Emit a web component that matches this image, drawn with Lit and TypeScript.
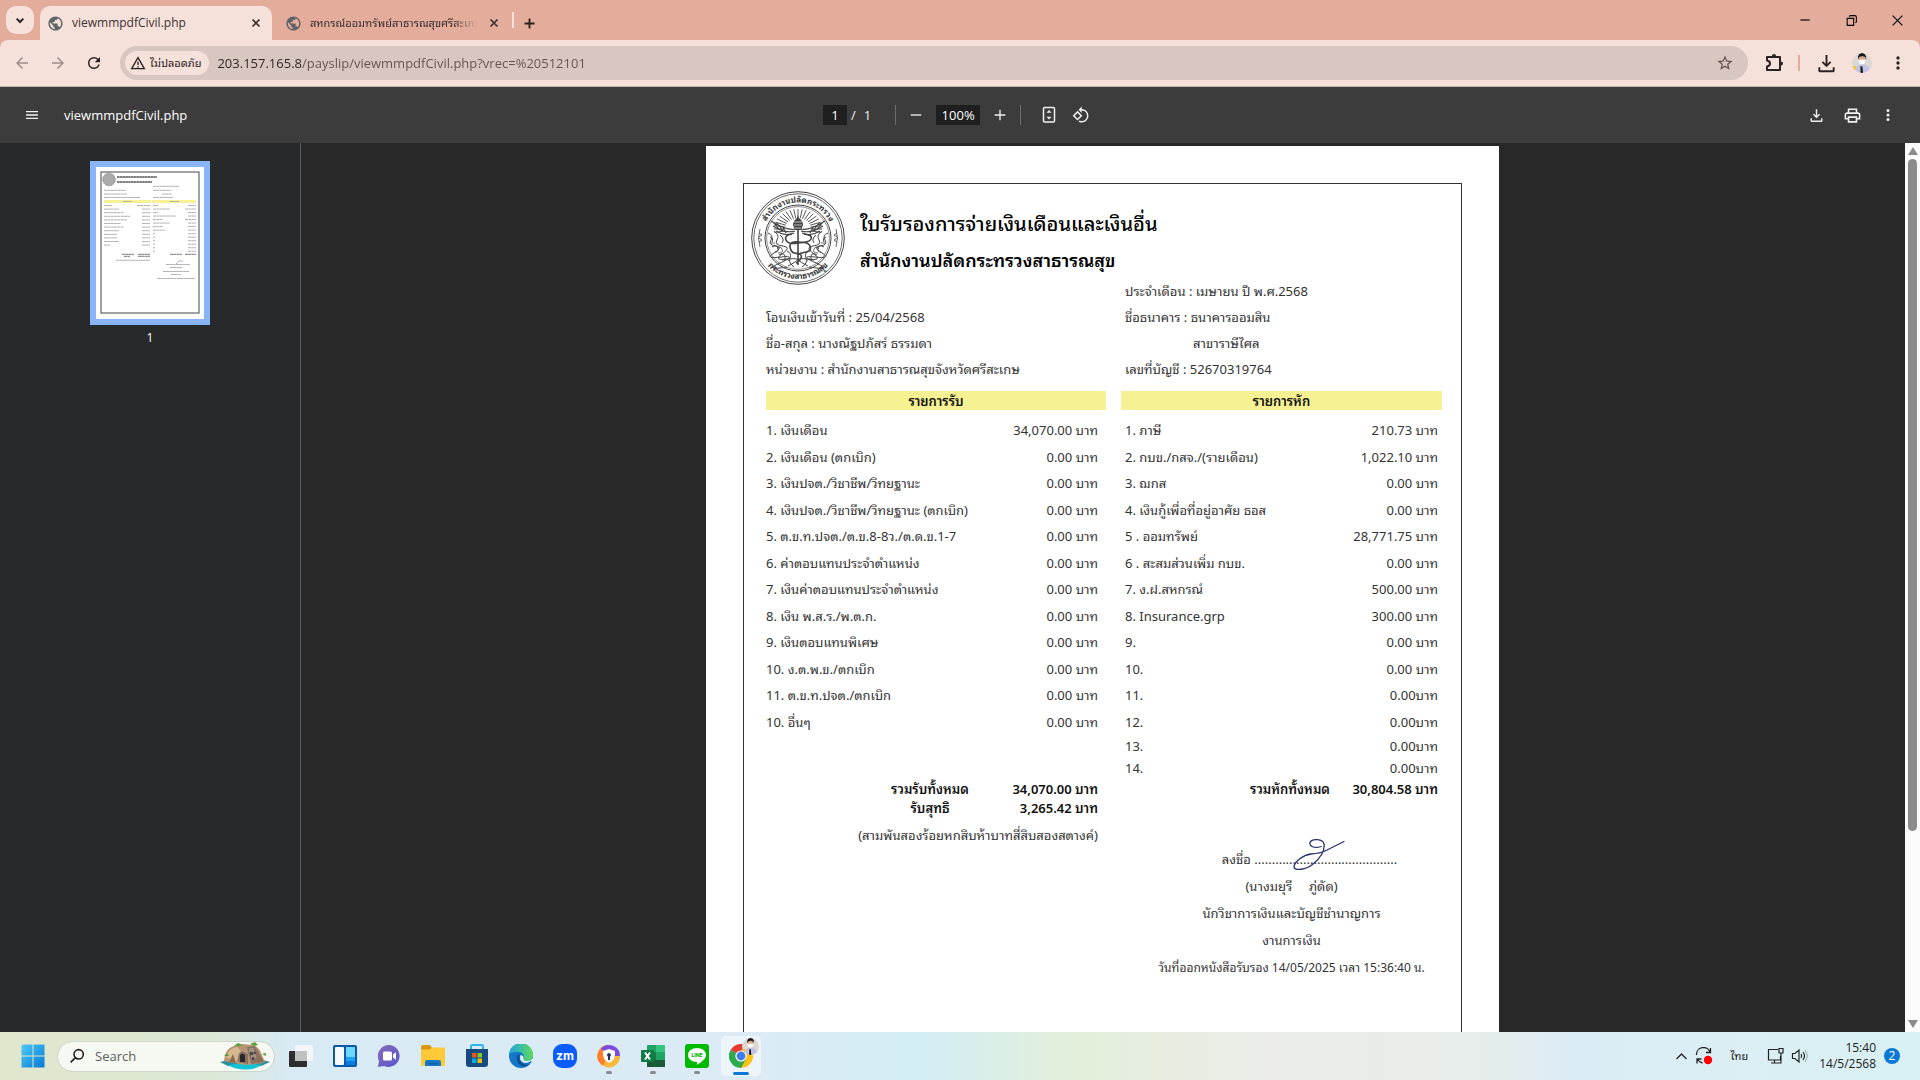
import { LitElement, html, svg, css, nothing } from "lit";
import { customElement } from "lit/decorators.js";

const THAI = css`"Noto Sans", "Noto Sans Thai Looped", "Loma", "Noto Sans Thai", "Liberation Sans", sans-serif`;

const icon = (path: string, size = 20) => svg`<svg viewBox="0 0 24 24" width=${size} height=${size} aria-hidden="true"><path fill="currentColor" d=${path}/></svg>`;
const line = (path: string, size = 20, w = 2) => svg`<svg viewBox="0 0 24 24" width=${size} height=${size} aria-hidden="true"><path fill="none" stroke="currentColor" stroke-width=${w} d=${path}/></svg>`;

const P = {
  globe: "M12 2C6.48 2 2 6.48 2 12s4.48 10 10 10 10-4.48 10-10S17.52 2 12 2zm-1 17.93c-3.95-.49-7-3.85-7-7.93 0-.62.08-1.21.21-1.79L9 15v1c0 1.1.9 2 2 2v1.93zm6.9-2.54c-.26-.81-1-1.39-1.9-1.39h-1v-3c0-.55-.45-1-1-1H8v-2h2c.55 0 1-.45 1-1V7h2c1.1 0 2-.9 2-2v-.41c2.93 1.19 5 4.06 5 7.41 0 2.08-.8 3.97-2.1 5.39z",
  back: "M20 11H7.83l5.59-5.59L12 4l-8 8 8 8 1.41-1.41L7.83 13H20v-2z",
  forward: "M4 11h12.17l-5.59-5.59L12 4l8 8-8 8-1.41-1.41L16.17 13H4v-2z",
  reload: "M17.65 6.35A7.96 7.96 0 0 0 12 4a8 8 0 1 0 7.73 10h-2.08A6 6 0 1 1 12 6c1.66 0 3.14.69 4.22 1.78L13 11h7V4z",
  star: "M22 9.24l-7.19-.62L12 2 9.19 8.63 2 9.24l5.46 4.73L5.82 21 12 17.27 18.18 21l-1.63-7.03L22 9.24zM12 15.4l-3.76 2.27 1-4.28-3.32-2.88 4.38-.38L12 6.1l1.71 4.04 4.38.38-3.32 2.88 1 4.28L12 15.4z",
  download: "M12 16l-5-5 1.4-1.45 2.6 2.6V3h2v9.15l2.6-2.6L17 11zM5 21q-1.5 0-1.5-1.5V16h2v3h13v-3h2v3.5q0 1.500-1.500 1.500z",
  dots: "M12 8a2 2 0 1 0 0-4 2 2 0 0 0 0 4zm0 6a2 2 0 1 0 0-4 2 2 0 0 0 0 4zm0 6a2 2 0 1 0 0-4 2 2 0 0 0 0 4z",
  menu: "M3 18h18v-2H3v2zm0-5h18v-2H3v2zm0-7v2h18V6H3z",
  print: "M19 8h-1V3H6v5H5c-1.66 0-3 1.34-3 3v6h4v4h12v-4h4v-6c0-1.66-1.34-3-3-3zM8 5h8v3H8V5zm8 12v2H8v-4h8v2zm2-2v-2H6v2H4v-4c0-.55.45-1 1-1h14c.55 0 1 .45 1 1v4h-2z",
  rotate: "M7.34 6.41.86 12.9l6.49 6.48 6.49-6.48-6.5-6.49zM3.69 12.9l3.66-3.66L11 12.9l-3.66 3.66-3.65-3.66zm15.67-6.26A8.95 8.95 0 0 0 13 4V.76L8.76 5 13 9.240V6c1.79 0 3.58.68 4.95 2.05a7.007 7.007 0 0 1 0 9.900 6.973 6.973 0 0 1-7.790 1.440l-1.490 1.490C10.02 21.62 11.510 22 13 22c2.3 0 4.610-.88 6.360-2.640a8.980 8.980 0 0 0 0-12.720z",
};

const avatar = (size: number) => svg`<svg class="avatar" viewBox="0 0 20 20" width=${size} height=${size} role="img" aria-label="Profile">
  <defs><clipPath id="av"><circle cx="10" cy="10" r="10"/></clipPath></defs>
  <g clip-path="url(#av)"><path fill="#dcd8d6" d="M0 0h20v20H0z"/><path fill="#eccb3b" d="M0 13h4v4H1z"/>
  <path fill="#c3c2e2" d="M3 20l1.500-7 4-1.500h4l4 2 2 6.500z"/><path fill="#1a1518" d="M8.500 13l1 .5.800-.5.700 7H8.500z"/>
  <path fill="#d9a98c" d="M6.800 3.500h6.500v6q-3 4-6.500 0z"/><path fill="#fff" d="M6.600 7.200q3.400-1.400 6.800 0v2.300q-3.200 4-6.800 0z"/>
  <path fill="#1b1517" d="M6 6.500Q5.500 0 10 0t4.200 6.500l-1-2.500q-3-1.300-6 0z"/></g></svg>`;

/** Chrome window: tab strip and address bar. */
@customElement("browser-chrome")
class BrowserChrome extends LitElement {
  static styles = css`
    :host { display: block; font: 12px/16px "Open Sans", ${THAI}; color: #2b2322; background: #e4ac9b; }
    button { border: 0; padding: 0; background: none; color: inherit; font: inherit; display: grid; place-items: center; }
    svg { display: block; }
    .strip { display: flex; align-items: flex-end; height: 40px; }
    .find { width: 28px; height: 28px; margin: 0 6px; border-radius: 10px; background: #f5e0da; align-self: center; }
    .tab { display: flex; align-items: center; gap: 8px; width: 217px; height: 34px; padding: 0 8px 0 13px; color: #3b3130; }
    .tab.on { padding-left: 7px; border-radius: 10px 10px 0 0; background: #f5e0da; }
    .tab > svg { color: #5f6368; flex: none; }
    .label { flex: 1; min-width: 0; text-align: left; white-space: nowrap; overflow: hidden; display: block; line-height: 20px; }
    .fade { font-size: 11px; mask-image: linear-gradient(90deg, #000 85%, transparent); }
    .close { width: 16px; height: 34px; }
    .sep { width: 2px; height: 16px; background: #f5e0da; align-self: center; margin-left: 2px; }
    .new { width: 30px; height: 34px; }
    .win { margin-left: auto; display: flex; align-self: stretch; color: #000; }
    .win button { width: 46px; }
    .bar { display: flex; align-items: center; height: 46px; padding: 0 4px; background: #f5e0da; border-bottom: 1px solid #c9b3ae; border-radius: 8px 8px 0 0; }
    .nav { width: 36px; height: 36px; }
    .off { color: #9c8d89; }
    .omni { flex: 1; display: flex; align-items: center; height: 34px; margin: 0 8px; padding: 0 14px 0 5px; border-radius: 17px; background: #d8c6c0; }
    .chip { display: flex; align-items: center; gap: 4px; height: 24px; padding: 0 8px 0 5px; border-radius: 12px; background: #f5e0da; font-size: 11px; }
    .url { flex: 1; min-width: 0; height: 24px; margin-left: 8px; padding: 0; border: 0; outline: 0; font: 13px/24px "Open Sans", sans-serif; color: transparent;
      background: linear-gradient(90deg, #2b2322 84px, #62534f 84px); -webkit-background-clip: text; background-clip: text; }
    .omni > button { color: #5d504d; }
    .omni > .chip { color: #2b2322; }
    .rule { width: 2px; height: 16px; background: #e4ac9b; margin: 0 8px 0 6px; }
  `;
  render() {
    return html`
      <div class="strip">
        <button class="find" aria-label="Search tabs">${line("M7 10l5 5 5-5", 16, 3)}</button>
        <div class="tab on">${icon(P.globe, 17)}<button class="label">viewmmpdfCivil.php</button>
          <button class="close" aria-label="Close tab">${line("M6 6l12 12M18 6L6 18", 14, 3)}</button></div>
        <div class="tab">${icon(P.globe, 17)}<button class="label fade">สหกรณ์ออมทรัพย์สาธารณสุขศรีสะเกษ</button>
          <button class="close" aria-label="Close tab">${line("M6 6l12 12M18 6L6 18", 14, 3)}</button></div>
        <span class="sep"></span>
        <button class="new" aria-label="New tab">${line("M12 4v16M4 12h16", 15, 3)}</button>
        <div class="win">
          <button aria-label="Minimize">${line("M4 12h16", 14, 2)}</button>
          <button aria-label="Restore">${line("M4 8h12v13H4zM8 5q0-2 2-2h8q3 0 3 3v8q0 2-2 2", 13, 2)}</button>
          <button aria-label="Close">${line("M3 3l18 18M21 3L3 21", 13, 2)}</button>
        </div>
      </div>
      <div class="bar">
        <button class="nav off" aria-label="Back">${icon(P.back, 18)}</button>
        <button class="nav off" aria-label="Forward">${icon(P.forward, 18)}</button>
        <button class="nav" aria-label="Reload">${icon(P.reload, 18)}</button>
        <div class="omni">
          <button class="chip">${line("M12 4L2.500 20.500h19zM12 10v5M12 17v2", 16, 2)}ไม่ปลอดภัย</button>
          <input class="url" aria-label="Address" value="203.157.165.8/payslip/viewmmpdfCivil.php?vrec=%20512101" />
          <button aria-label="Bookmark">${icon(P.star, 18)}</button>
        </div>
        <button class="nav" aria-label="Extensions">${svg`<svg viewBox="0 0 20 20" width="20" height="20"><path fill="none" stroke="currentColor" stroke-width="2" stroke-linejoin="round" d="M3 4h13v13H3v-3.500q3-.5 3-3t-3-3z"/><path fill="currentColor" d="M8 3a2 2 0 0 1 4 0zM17 8.500a2 2 0 0 1 0 4z"/></svg>`}</button>
        <span class="rule"></span>
        <button class="nav" aria-label="Downloads">${icon(P.download, 23)}</button>
        <button class="nav" aria-label="Profile">${avatar(20)}</button>
        <button class="nav" aria-label="Menu">${icon(P.dots, 20)}</button>
      </div>`;
  }
}

/** Toolbar of the PDF viewer. */
@customElement("pdf-toolbar")
class PdfToolbar extends LitElement {
  static styles = css`
    :host { display: grid; grid-template-columns: 1fr auto 1fr; align-items: center; height: 56px; padding: 0 14px; background: #3c3c3c; color: #f1f1f1; font: 13px/20px "Open Sans", sans-serif; }
    button { border: 0; padding: 0; background: none; color: inherit; width: 36px; height: 36px; display: grid; place-items: center; }
    svg { display: block; }
    .group { display: flex; align-items: center; }
    .mid button { width: 32px; }
    .end { justify-content: flex-end; }
    .title { font-size: 13px; margin: 0 0 0 14px; font-weight: 500; color: #fff; }
    input { height: 20px; border: 0; padding: 0; background: #1f1f1f; color: #fff; font: inherit; text-align: center; }
    .page { width: 24px; }
    .zoom { width: 44px; margin: 0 4px; }
    .of { margin: 0 24px 0 4px; display: flex; gap: 8px; }
    .rule { width: 1px; height: 20px; background: #6c6c6c; }
    .rule.last { margin: 0 12px 0 4px; }
    .rule.first { margin-right: 4px; }
  `;
  render() {
    return html`
      <div class="group"><button aria-label="Menu">${icon(P.menu, 16)}</button><h1 class="title">viewmmpdfCivil.php</h1></div>
      <div class="group mid">
        <input class="page" aria-label="Page number" value="1" /><span class="of"><span>/</span><span>1</span></span>
        <span class="rule first"></span>
        <button aria-label="Zoom out">${line("M4 12h16", 16, 2)}</button>
        <input class="zoom" aria-label="Zoom level" value="100%" />
        <button aria-label="Zoom in">${line("M12 4v16M4 12h16", 16, 2)}</button>
        <span class="rule last"></span>
        <button aria-label="Fit to page">${svg`<svg viewBox="0 0 16 18" width="16" height="18"><rect x="2.500" y="1.500" width="11" height="14.500" rx="1" fill="none" stroke="currentColor" stroke-width="1.500"/><path fill="currentColor" d="M8 4l2.500 2.800h-5zM8 13.500l2.500-2.800h-5z"/></svg>`}</button>
        <button aria-label="Rotate counterclockwise">${icon(P.rotate, 18)}</button>
      </div>
      <div class="group end">
        <button aria-label="Download">${icon(P.download, 17)}</button>
        <button aria-label="Print">${icon(P.print, 19)}</button>
        <button aria-label="More actions">${icon(P.dots, 18)}</button>
      </div>`;
  }
}

const INCOME: [string, string][] = [
  ["1. เงินเดือน", "34,070.00 บาท"],
  ["2. เงินเดือน (ตกเบิก)", "0.00 บาท"],
  ["3. เงินปจต./วิชาชีพ/วิทยฐานะ", "0.00 บาท"],
  ["4. เงินปจต./วิชาชีพ/วิทยฐานะ (ตกเบิก)", "0.00 บาท"],
  ["5. ต.ข.ท.ปจต./ต.ข.8-8ว./ต.ด.ข.1-7", "0.00 บาท"],
  ["6. ค่าตอบแทนประจำตำแหน่ง", "0.00 บาท"],
  ["7. เงินค่าตอบแทนประจำตำแหน่ง", "0.00 บาท"],
  ["8. เงิน พ.ส.ร./พ.ต.ก.", "0.00 บาท"],
  ["9. เงินตอบแทนพิเศษ", "0.00 บาท"],
  ["10. ง.ต.พ.ข./ตกเบิก", "0.00 บาท"],
  ["11. ต.ข.ท.ปจต./ตกเบิก", "0.00 บาท"],
  ["10. อื่นๆ", "0.00 บาท"],
];
const DEDUCT: [string, string][] = [
  ["1. ภาษี", "210.73 บาท"],
  ["2. กบข./กสจ./(รายเดือน)", "1,022.10 บาท"],
  ["3. ฌกส", "0.00 บาท"],
  ["4. เงินกู้เพื่อที่อยู่อาศัย ธอส", "0.00 บาท"],
  ["5 . ออมทรัพย์", "28,771.75 บาท"],
  ["6 . สะสมส่วนเพิ่ม กบข.", "0.00 บาท"],
  ["7. ง.ฝ.สหกรณ์", "500.00 บาท"],
  ["8. Insurance.grp", "300.00 บาท"],
  ["9.", "0.00 บาท"],
  ["10.", "0.00 บาท"],
  ["11.", "0.00บาท"],
  ["12.", "0.00บาท"],
  ["13.", "0.00บาท"],
  ["14.", "0.00บาท"],
];

const rays = Array.from({ length: 21 }, (_, i) => (-100 + i * 10) * Math.PI / 180);
const seal = svg`<svg class="seal" viewBox="0 0 94 94" width="94" height="94" role="img" aria-label="ตรากระทรวงสาธารณสุข">
  <defs><path id="up" d="M11.500 47a35.500 35.500 0 0 1 71 0"/><path id="down" d="M6 47a41 41 0 0 0 82 0"/></defs>
  <g fill="none" stroke="#444">
    <circle cx="47" cy="47" r="46.300" stroke-width="1"/><circle cx="47" cy="47" r="44.200" stroke-width=".8"/>
    <circle cx="47" cy="47" r="33" stroke-width="1"/><circle cx="47" cy="47" r="31.400" stroke-width=".6"/>
    <path stroke-width=".9" d=${rays.map(a => `M${(47 + 13 * Math.sin(a)).toFixed(1)} ${(38 - 11 * Math.cos(a)).toFixed(1)}L${(47 + 24 * Math.sin(a)).toFixed(1)} ${(38 - 20 * Math.cos(a)).toFixed(1)}`).join("")}/>
    <path stroke-width="1.100" d="M44 38Q36 40 20 30M44 40Q34 43 22 35M43 42Q34 46 25 40M50 38Q58 40 74 30M50 40Q60 43 72 35M51 42Q60 46 69 40M21 30l7 8M26 32l6 8M31 35l4 7M73 30l-7 8M68 32l-6 8M63 35l-4 7"/>
    <path stroke-width="1.600" d="M47 38v36M41 43q-8 1-6 6t12 3 12 3-4 6-9 3M53 43q9 1 7 5t-12 3-9 5 5 6q8 1 6 5t-5 5"/>
    <path stroke-width="1" d="M17 42q6 2 3 7t5 6-2 7 7 4-1 6 7 4M77 42q-6 2-3 7t-5 6 2 7-7 4 1 6-7 4M23 40q6 4 3 9t6 6-1 8 7 5-1 7M71 40q-6 4-3 9t-6 6 1 8-7 5 1 7M29 44q5 4 2 8M65 44q-5 4-2 8M36 60q5 2 3 7t4 9M58 60q-5 2-3 7t-4 9M19 46q4 1 2 5M75 46q-4 1-2 5M21 56q5-3 6 1t-3 4M73 56q-5-3-6 1t3 4M28 64q5-3 6 1t-3 4M66 64q-5-3-6 1t3 4"/>
    <path stroke-width=".8" d="M20 52h4M70 52h4M26 58q3-4 5 0t-4 4M68 58q-3-4-5 0t4 4M33 70q3-4 5 0M61 70q-3-4-5 0M9 38q-3 9 0 18M85 38q3 9 0 18M8 42l3 2-3 2M8 47l3 2-3 2M86 42l-3 2 3 2M86 47l-3 2 3 2"/>
  </g>
  <path fill="#444" d="M47 24l1 3q4 3 4 7l-2 5h-6l-2-5q0-4 4-7z"/><path stroke="#ddd" stroke-width=".8" d="M43 31h8M43 34h8M44 37h6"/>
  <g class="ring" fill="#333" text-anchor="middle">
    <text><textPath href="#up" startOffset="50%">สำนักงานปลัดกระทรวง</textPath></text>
    <text><textPath href="#down" startOffset="50%">กระทรวงสาธารณสุข</textPath></text>
  </g>
</svg>`;

/** The printed payslip page. */
@customElement("pay-slip")
class PaySlip extends LitElement {
  static styles = css`
    :host { display: block; width: 793px; min-height: 1123px; box-sizing: border-box; padding: 37px; background: #fff; color: #333; font: 13px/26px ${THAI}; white-space: nowrap; }
    .frame { border: 1px solid #333; min-height: 1010px; padding: 7px 19px 0 22px; }
    .head { display: flex; gap: 15px; height: 94px; margin-left: -15px; color: #000; }
    .seal { display: block; flex: none; }
    .ring { font: 8px ${THAI}; font-weight: 700; }
    .names { padding-top: 14px; }
    h2, h3, p { margin: 0; font-weight: 600; line-height: 37px; }
    h2 { font-size: 20px; font-weight: 500; }
    h3 { font-size: 18px; }
    .cols { display: grid; grid-template-columns: 340fr 321fr; gap: 15px; }
    .info { margin-top: -7px; align-items: end; }
    p { font-weight: 400; line-height: 26px; }
    .right { padding-left: 4px; }
    .branch { padding-left: 68px; }
    .cols.lists { margin-top: 9px; align-items: start; }
    table { width: 100%; border-collapse: collapse; }
    caption { height: 19px; line-height: 20px; background: #f6f193; color: #111; font-weight: 600; margin-bottom: 7px; }
    td { padding: 0 8px 0 0; height: 26px; line-height: 22px; }
    tr:nth-child(even) td { height: 27px; }
    tr:nth-child(n + 13) td { height: 22px; }
    td:last-child { text-align: right; }
    .deduct td { padding: 0 4px; }
    .totals { margin-top: 1px; }
    .sum { display: grid; grid-template-columns: 1fr 80px 128px; padding-right: 8px; line-height: 19px; color: #111; font-weight: 600; text-align: center; }
    .sum.due { grid-template-columns: 1fr 80px 108px; padding-right: 4px; }
    .sum b { text-align: right; font-weight: 600; }
    .words { text-align: right; padding-right: 8px; margin-top: 4px; }
    .sign { padding: 47px 0 0 20px; text-align: center; }
    .sign p { line-height: 27px; }
    .line { position: relative; padding-left: 36px; }
    .ink { position: absolute; left: 50%; top: -8px; }
    .date { font-size: 12px; }
  `;
  rows(list: [string, string][]) {
    return list.map(([name, value]) => html`<tr><td>${name}</td><td>${value}</td></tr>`);
  }
  render() {
    return html`<article class="frame">
      <header class="head">${seal}<div class="names"><h2>ใบรับรองการจ่ายเงินเดือนและเงินอื่น</h2><h3>สำนักงานปลัดกระทรวงสาธารณสุข</h3></div></header>
      <section class="cols info">
        <div><p>โอนเงินเข้าวันที่ : 25/04/2568</p><p>ชื่อ-สกุล : นางณัฐปภัสร์ ธรรมดา</p><p>หน่วยงาน : สำนักงานสาธารณสุขจังหวัดศรีสะเกษ</p></div>
        <div class="right"><p>ประจำเดือน : เมษายน ปี พ.ศ.2568</p><p>ชื่อธนาคาร : ธนาคารออมสิน</p><p class="branch">สาขาราษีไศล</p><p>เลขที่บัญชี : 52670319764</p></div>
      </section>
      <section class="cols lists">
        <table><caption>รายการรับ</caption><tbody>${this.rows(INCOME)}</tbody></table>
        <table class="deduct"><caption>รายการหัก</caption><tbody>${this.rows(DEDUCT)}</tbody></table>
      </section>
      <section class="cols totals">
        <div>
          <div class="sum"><span></span><span>รวมรับทั้งหมด</span><b>34,070.00 บาท</b><span></span><span>รับสุทธิ</span><b>3,265.42 บาท</b></div>
          <p class="words">(สามพันสองร้อยหกสิบห้าบาทสี่สิบสองสตางค์)</p>
        </div>
        <div>
          <div class="sum due"><span></span><span>รวมหักทั้งหมด</span><b>30,804.58 บาท</b></div>
          <div class="sign">
            <p class="line">ลงชื่อ .........................................<svg class="ink" viewBox="0 0 54 32" width="54" height="32" aria-hidden="true"><path fill="none" stroke="#2a3070" stroke-width="1.300" stroke-linecap="round" d="M29 8.500C22 11 17 8 18 4.500 20 0 31 1 32 6c1 6-3 14-11 20C14 32 2 33 2 29c0-5 9-12 17-13 6-.5 10-1 14-3L52 3.500"/></svg></p>
            <p>(นางมยุรี &nbsp;&nbsp;&nbsp; ภู่ดัด)</p>
            <p>นักวิชาการเงินและบัญชีชำนาญการ</p>
            <p>งานการเงิน</p>
            <p class="date">วันที่ออกหนังสือรับรอง 14/05/2025 เวลา 15:36:40 น.</p>
          </div>
        </div>
      </section>
    </article>`;
  }
}

/** Taskbar with search, pinned apps and tray. */
@customElement("task-bar")
class TaskBar extends LitElement {
  static styles = css`
    :host { display: flex; align-items: center; height: 48px; padding: 0 20px 0 10px; box-sizing: border-box; font: 12px/16px "Open Sans", ${THAI}; color: #222;
      background: linear-gradient(90deg, #dfe6cc 0, #dce8d6 11%, #d8eaf3 15%, #dcebf6 40%, #d3eef5 48%, #e3efda 56%, #ebece8 66%, #e6edea 77%, #dcecf6 82%, #d9f1f2 100%); }
    button { border: 0; padding: 0; background: none; color: inherit; font: inherit; display: grid; place-items: center; }
    svg { display: block; }
    .app { position: relative; width: 40px; height: 40px; margin: 0 2px; border-radius: 5px; }
    .app.on { background: #eef5fa; }
    .mark { position: absolute; bottom: 2px; left: 50%; width: 6px; margin-left: -3px; height: 3px; border-radius: 2px; background: #858b90; }
    .on .mark { width: 16px; margin-left: -8px; background: #0a78d4; bottom: 1px; }
    .face { position: absolute; right: 2px; top: 2px; }
    .start { width: 46px; height: 40px; }
    .search { display: flex; align-items: center; gap: 10px; width: 218px; height: 31px; box-sizing: border-box; margin: 0 4px 0 1px; padding: 0 4px 0 11px; border: 1px solid #cdd6cb; border-radius: 16px; background: #f6f8f2; }
    .search input { flex: 1; min-width: 0; border: 0; outline: 0; padding: 0; background: none; font: 13px/20px "Open Sans", sans-serif; }
    .search input::placeholder { color: #5c5f5a; }
    .tray { margin-left: auto; display: flex; align-items: center; gap: 6px; }
    .clock { text-align: right; display: block; margin-left: 4px; }
    .lang { margin: 0 13px 0 12px; font-size: 11px; }
    .badge { width: 16px; height: 16px; border-radius: 8px; background: #0a78d4; color: #fff; margin-left: 2px; }
  `;
  app(label: string, art: unknown, state = "") {
    return html`<button class="app ${state === "on" ? "on" : ""}" aria-label=${label}>${svg`<svg viewBox="0 0 24 24" width="24" height="24" aria-hidden="true">${art}</svg>`}
      ${state ? html`<span class="mark"></span>` : nothing}${state === "on" ? html`<span class="face">${avatar(17)}</span>` : nothing}</button>`;
  }
  render() {
    return html`
      <button class="start" aria-label="Start">${svg`<svg viewBox="0 0 24 24" width="24" height="24"><defs><linearGradient id="w" x2="1" y2="1"><stop stop-color="#4cc9fb"/><stop offset="1" stop-color="#0678d2"/></linearGradient></defs><path fill="url(#w)" d="M1.500.5H11.500V11.500H.5V1.500zM12.500.5H23.500V11.500H12.500zM.5 12.500H11.500V23.500H.5zM12.500 12.500H23.500V23.500H12.500z"/></svg>`}</button>
      <label class="search">${line("M14.500 2.500a7 7 0 1 1 0 14 7 7 0 0 1 0-14zM9.500 14.500L2.500 21.500", 16, 2.4)}
        <input placeholder="Search" aria-label="Search" />
        ${svg`<svg viewBox="0 0 50 28" width="50" height="28" aria-hidden="true"><path fill="#2f8f9d" d="M0 20l12-3h28l10 3-9 4H8z"/><path fill="#12c3d6" d="M8 23q16-3 34 0-8 5-18 4.500T8 23z"/><path fill="#b99672" d="M4 19Q5 6 14 4l9-2 8 1q8 1 10 8l4 9-8 2-12 1z"/><path fill="#d6b791" d="M6 15q3-9 11-10l4 4-5 11z"/><path fill="#8a7263" d="M18 20q-1-9 4-11l6 3v10zM27 5l8-1 5 9v8l-9 1z"/><path fill="#a4907f" d="M29 6h5v4h-5zM31 12h5v4h-5z"/><path fill="#4b4650" d="M30 10h3v3h-3zM34 10h2v2h-2zM32 15h2v3h-2z"/><path fill="#28272d" d="M20 20v-7q2-3 5 0v7z"/><path fill="#8d6a50" d="M9 20l4-8 3 9zM38 20l2-7 4 7z"/><path fill="#5aa13e" d="M14 4l4-3 5 2-4 1zM30 2l5-2 3 3-4 1zM4 14l3-3 2 3zM42 12l4-1v3z"/></svg>`}
      </label>
      ${this.app("Task View", svg`<path fill="#2e2e2e" d="M0 8q0-1 1-1h17v15q0 1-1 1H1q-1 0-1-1z"/><path fill="#f4f5f6" d="M6 1h17q1 0 1 1v14q0 1-1 1H6z"/><path fill="#c0c1c2" d="M6 7h12v10H6z"/>`)}
      ${this.app("Widgets", svg`<rect y="1" width="24" height="22" rx="2" fill="#0c59a4"/><rect x="2" y="3" width="9" height="18" rx="1" fill="#f5f9fc"/><path fill="#6fd7ff" d="M13 3h9v10h-9z"/><path fill="#1ea2f5" d="M13 13h9v4h-9z"/><path fill="#0b7ce4" d="M13 17h9v4h-9z"/>`)}
      ${this.app("Chat", svg`<defs><linearGradient id="c" x2="1" y2="1"><stop stop-color="#8a6bb5"/><stop offset="1" stop-color="#5356d0"/></linearGradient></defs><path fill="url(#c)" d="M12 1a11 11 0 1 1-5 21L1 23l1-6A11 11 0 0 1 12 1z"/><rect x="6" y="7.500" width="9" height="9" rx="1.500" fill="#fff"/><path fill="#fff" d="M16 10.500l3-2.500v8l-3-2.500z"/>`)}
      ${this.app("File Explorer", svg`<path fill="#d99a10" d="M0 3q0-2 2-2h7l2 3v4H0z"/><path fill="#fdc938" d="M0 5.500h9l2-2h13V21q0 1-1 1H1q-1 0-1-1z"/><path fill="#1679c8" d="M4 22v-4q0-2 2-2h12q2 0 2 2v4z"/><path fill="#0c5ea4" d="M7 19h10v1.500H7z"/>`)}
      ${this.app("Microsoft Store", svg`<path fill="none" stroke="#2ab7ea" stroke-width="2" d="M6 6V2.500Q6 1 7.500 1h9Q18 1 18 2.500V6"/><path fill="#174a7e" d="M1 5h22v15q0 3-3 3H4q-3 0-3-3z"/><path fill="#f1511b" d="M7 9h4.500v4.500H7z"/><path fill="#80cc28" d="M12.500 9H17v4.500h-4.500z"/><path fill="#00adef" d="M7 14.500h4.500V19H7z"/><path fill="#fbbc09" d="M12.500 14.500H17V19h-4.500z"/>`)}
      ${this.app("Edge", svg`<defs><linearGradient id="e" x2="1"><stop stop-color="#1ba7e3"/><stop offset="1" stop-color="#5fd95b"/></linearGradient></defs><circle cx="12" cy="12" r="12" fill="#1478c8"/><path fill="url(#e)" d="M0 11A12 12 0 0 1 24 11q0 6-6 6-4 0-3.500-2.500Q16 9 10 8 3 7 0 11z"/><path fill="#0c4f96" d="M9 10q-4 8 4 12 5 1 8-2-6 2-9-2-3-4-1-7z"/><path fill="#dfeef7" d="M11.500 11q-2 6 4 8 4 0 6.500-2l2 1v-4q-2 3-6 3t-3.500-2.500q.5-3-3-3.500z"/>`)}
      ${this.app("Zoom", svg`<rect width="24" height="24" rx="9" fill="#0b5cff"/><text x="12" y="16" text-anchor="middle" fill="#fff" font-family="Inter, sans-serif" font-weight="700" font-size="12">zm</text>`)}
      ${this.app("Secure Browser", svg`<path fill="#ff7f27" d="M12 1A11 11 0 0 0 8 22.500L12 12z"/><path fill="#7b4bdc" d="M4 4.500A11 11 0 0 1 23 12l-11 1z"/><path fill="#f6b93a" d="M23 12A11 11 0 0 1 6 21.500L12 12z"/><path fill="#fff" d="M12 5l6 2q1 9-6 12-7-3-6-12z"/><path fill="#26305c" d="M12 9a2 2 0 0 1 1 3.700V16h-2v-3.300A2 2 0 0 1 12 9z"/>`, "run")}
      ${this.app("Excel", svg`<rect x="6" y="1" width="18" height="22" rx="1" fill="#21a366"/><path fill="#107c41" d="M6 8h9v8H6z"/><path fill="#33c481" d="M15 1h9v7h-9z"/><path fill="#185c37" d="M6 16h18v7H6z"/><rect y="6" width="13" height="12" rx="1" fill="#107c41"/><path stroke="#fff" stroke-width="2" d="M4 8.500l5 7M9 8.500l-5 7"/>`, "run")}
      ${this.app("LINE", svg`<rect width="24" height="24" rx="3" fill="#00b900"/><path fill="#fff" d="M12 4c5 0 9 3 9 7 0 3-3 6-9 10v-3c-5 0-9-3-9-7s4-7 9-7z"/><text x="12" y="13" text-anchor="middle" fill="#00b900" font-family="Inter, sans-serif" font-weight="800" font-size="5">LINE</text>`, "run")}
      ${this.app("Google Chrome", svg`<path fill="#e33b2e" d="M12 12L1.600 6A12 12 0 0 1 22.400 6z"/><path fill="#fbc116" d="M12 12V6h10.400A12 12 0 0 1 12 24z"/><path fill="#2da94f" d="M1.600 6A12 12 0 0 0 12 24l5-9-5-3z"/><circle cx="12" cy="12" r="5.600" fill="#fff"/><circle cx="12" cy="12" r="4.400" fill="#3b7ded"/>`, "on")}
      <div class="tray">
        <button aria-label="Show hidden icons">${line("M4 16l8-8 8 8", 15, 2)}</button>
        <button aria-label="Update">${svg`<svg viewBox="0 0 18 18" width="18" height="18"><path fill="none" stroke="currentColor" stroke-width="1.300" d="M1.500 8A7 7 0 0 1 15 5M15.500 1v4.500H11M2 16.500V12h4.500M2.500 12.500q2 3 5 3.500"/><circle cx="13" cy="13" r="4.200" fill="#f00"/></svg>`}</button>
        <button class="lang">ไทย</button>
        <button aria-label="Network">${svg`<svg viewBox="0 0 18 18" width="18" height="18"><path fill="none" stroke="currentColor" stroke-width="1.200" d="M11 2.500H1.500v10.500h12V9M7.500 13v3M4 16h7M12 1.500h4v4.500h-4zM14 6v10h-3"/></svg>`}</button>
        <button aria-label="Volume">${svg`<svg viewBox="0 0 18 18" width="18" height="18"><path fill="none" stroke="currentColor" stroke-width="1.200" d="M1.500 6.500H4L8 3v12l-4-3.500H1.500zM10 7q1.500 2 0 4M12 5q3 4 0 8"/><path fill="none" stroke="#9aa" d="M14 3q4.500 6 0 12"/></svg>`}</button>
        <button class="clock">15:40<br />14/5/2568</button>
        <button class="badge" aria-label="2 notifications">2</button>
      </div>`;
  }
}

@customElement("app-root")
class AppRoot extends LitElement {
  static styles = css`
    :host { display: flex; flex-direction: column; height: 100vh; overflow: hidden; background: #282828; }
    .viewer { flex: 1; min-height: 0; display: flex; }
    .side { width: 300px; border-right: 1px solid #5a5a5a; background: #28292a; display: flex; flex-direction: column; align-items: center; padding-top: 18px; gap: 4px; color: #fff; font: 12px/18px "Open Sans", sans-serif; }
    .thumb { padding: 0; border: 6px solid #8ab4f8; background: #fff; display: block; }
    .thumb svg { display: block; }
    .stage { flex: 1; min-width: 0; overflow: hidden; display: flex; justify-content: center; padding: 3px 1px 0 0; }
    .scroll { width: 15px; background: #fcfcfc; display: flex; flex-direction: column; align-items: center; justify-content: space-between; gap: 4px; padding: 4px 0; box-sizing: border-box; }
    .bar { width: 9px; flex: 672; border-radius: 5px; background: #8b8b8b; }
    .rest { flex: 181; }
  `;
  thumb() {
    const left = INCOME.map(([n], i) => svg`<path d=${`M8 ${38.5 + i * 3.6}h${Math.round(n.length * 0.7)}M${i ? 46 : 41} ${38.5 + i * 3.6}H54`}/>`);
    const right = DEDUCT.map(([n], i) => svg`<path d=${`M57 ${38.5 + i * 3.52}h${Math.max(2, Math.round(n.length * 0.75))}M${i === 1 || i === 4 ? 89 : 92} ${38.5 + i * 3.52}H100`}/>`);
    return svg`<svg viewBox="0 0 108 152" width="108" height="152" aria-hidden="true">
      <rect x="5" y="5" width="98" height="141" fill="none" stroke="#444"/>
      <circle cx="13" cy="12.500" r="6.300" fill="#aaa" stroke="#888" stroke-dasharray="1 .6"/>
      <path stroke="#555" stroke-width="1.400" stroke-dasharray="2.500 .3" d="M21 10h40M21 15h35"/>
      <path fill="#f6f193" d="M8 33h47v3H8zM56 33h44v3H56z"/>
      <g stroke="#a8a8a8" stroke-width=".9" stroke-dasharray="3 .3"><path d="M57 19.300h26M8 23.300h22M57 23.300h18M8 27h23M66 27h10M8 30.500h36M57 30.500h20M27 34.500h9M74 34.500h9"/>${left}${right}
        <path stroke="#666" d="M26 87.300h12M42 87.300h12M28 89.300h6M42 89.300h12M74 87.300h12M89 87.300h11"/><path d="M20 93.300h34M70 97.500h24M74 100.500h12M67 104.500h26M75 107.500h10M61 111.500h38"/></g>
      <path fill="none" stroke="#8088b0" stroke-width=".6" d="M80 97l3-3h4"/></svg>`;
  }
  render() {
    return html`
      <browser-chrome></browser-chrome>
      <pdf-toolbar></pdf-toolbar>
      <main class="viewer">
        <nav class="side" aria-label="Pages"><button class="thumb" aria-label="Page 1">${this.thumb()}</button><span>1</span></nav>
        <div class="stage"><pay-slip></pay-slip></div>
        <div class="scroll" aria-hidden="true">
          <svg viewBox="0 0 10 8" width="10" height="8"><path fill="#8b8b8b" d="M5 0l5 8H0z"/></svg>
          <span class="bar"></span><span class="rest"></span>
          <svg viewBox="0 0 10 8" width="10" height="8"><path fill="#8b8b8b" d="M5 8l5-8H0z"/></svg>
        </div>
      </main>
      <task-bar></task-bar>`;
  }
}
